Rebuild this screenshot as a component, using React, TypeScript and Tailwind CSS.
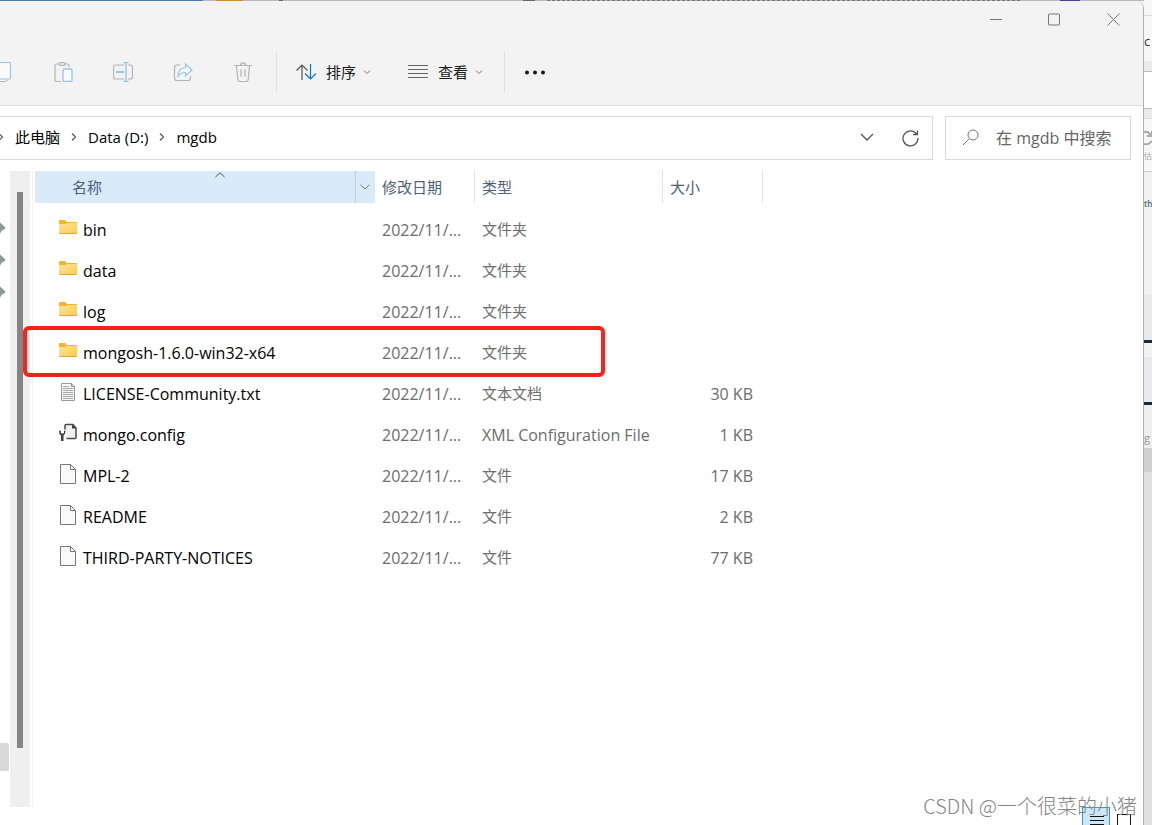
import React from "react";

type Kind = "folder" | "text" | "config" | "file";

const files: { name: string; kind: Kind; type: string; size: string; marked?: boolean }[] = [
  { name: "bin", kind: "folder", type: "文件夹", size: "" },
  { name: "data", kind: "folder", type: "文件夹", size: "" },
  { name: "log", kind: "folder", type: "文件夹", size: "" },
  { name: "mongosh-1.6.0-win32-x64", kind: "folder", type: "文件夹", size: "", marked: true },
  { name: "LICENSE-Community.txt", kind: "text", type: "文本文档", size: "30 KB" },
  { name: "mongo.config", kind: "config", type: "XML Configuration File", size: "1 KB" },
  { name: "MPL-2", kind: "file", type: "文件", size: "17 KB" },
  { name: "README", kind: "file", type: "文件", size: "2 KB" },
  { name: "THIRD-PARTY-NOTICES", kind: "file", type: "文件", size: "77 KB" },
];

function FileIcon({ kind }: { kind: Kind }) {
  if (kind === "folder") {
    return (
      <svg width="18" height="20" viewBox="0 0 18 20" className="shrink-0">
        <defs>
          <linearGradient id="folder" x1="0" y1="0" x2="1" y2="1">
            <stop offset="0" stopColor="#ffe3a0" />
            <stop offset="1" stopColor="#fbcb48" />
          </linearGradient>
        </defs>
        <path d="M0 3q0-1 1-1h5l1.500 2H17q1 0 1 1v4H0z" fill="#f8b51f" />
        <path d="M0 6h6.500L8 5h10v10q0 1-1 1H1q-1 0-1-1z" fill="url(#folder)" />
        <path d="M0.500 15.500h17" stroke="#e3a92e" />
      </svg>
    );
  }
  if (kind === "text") {
    return (
      <svg width="18" height="20" viewBox="0 0 18 20" fill="none" className="shrink-0">
        <path d="M2.500 1.500h10l3 3v14h-13z" fill="#fafafa" stroke="#9a9a9a" />
        <path d="M12.500 1.500v3h3" stroke="#8a8a8a" />
        <path d="M4 4.500h6M4 6.500h10M4 8.500h10M4 10.500h10M4 12.500h10M4 14.500h10M4 16.500h10" stroke="#a6a6a6" />
      </svg>
    );
  }
  if (kind === "config") {
    return (
      <svg width="18" height="20" viewBox="0 0 18 20" fill="none" className="shrink-0">
        <path d="M6 6.500V2.500q0-1 1-1h7L17 5v9.500q0 1-1 1H7.500" fill="#f0f0f2" stroke="#4a4a4a" strokeWidth="1.500" />
        <path d="M13 1.500v4h4.500z" fill="#444" />
        <path d="M0 8q0 3.500 2 4.200V18h2.500v-5.800Q6.500 11 6.500 8L5 7.500V10l-1.700.8L1.800 10V7.500z" fill="#3c3c3c" />
      </svg>
    );
  }
  return (
    <svg width="18" height="20" viewBox="0 0 18 20" fill="none" className="shrink-0">
      <path d="M1.500.5h10l5 5v14h-15z" fill="#fafafa" stroke="#777" />
      <path d="M11.500.5v5h5" stroke="#777" />
    </svg>
  );
}

function Chevron({ className = "" }: { className?: string }) {
  return (
    <svg width="8" height="8" viewBox="0 0 8 8" fill="none" stroke="currentColor" className={className}>
      <path d="M1 2.500l3 3 3-3" />
    </svg>
  );
}

function Crumb({ children }: { children: React.ReactNode }) {
  return (
    <li className="flex items-center">
      <svg width="6" height="10" viewBox="0 0 6 10" fill="none" stroke="#555" strokeWidth="1.200" className="mr-[11px]">
        <path d="M1 1.500L4.500 5 1 8.500" />
      </svg>
      <a href="#" className="mr-[11px]">{children}</a>
    </li>
  );
}

function TitleBar() {
  return (
    <div className="flex h-[38px] justify-end pb-0.5 text-[#777]">
      <button aria-label="最小化" className="flex w-[58px] items-center justify-center">
        <svg width="13" height="13" viewBox="0 0 13 13" fill="none" stroke="currentColor"><path d="M0 6.500h12" /></svg>
      </button>
      <button aria-label="最大化" className="flex w-[58px] items-center justify-center">
        <svg width="13" height="13" viewBox="0 0 13 13" fill="none" stroke="currentColor"><rect x=".5" y="1" width="11" height="11" rx=".5" /></svg>
      </button>
      <button aria-label="关闭" className="flex w-[60px] items-center justify-center">
        <svg width="13" height="13" viewBox="0 0 13 13" fill="none" stroke="currentColor"><path d="M.5.5l12 12M12.500.5l-12 12" /></svg>
      </button>
    </div>
  );
}

function Toolbar() {
  return (
    <div className="flex h-[66px] items-center text-[15px] text-[#1a1a1a]">
      <div className="flex items-center gap-10" role="group">
        <button aria-label="复制" className="h-5 w-[13px]">
          <svg width="12" height="20" viewBox="0 0 12 20" fill="none">
            <path d="M0 19.500h5q2 0 2.500-2" stroke="#b4b4b4" />
            <path d="M0 .5h9q1.500 0 1.500 1.500v13.500q0 1.500-1.500 1.500H0" stroke="#94c6ea" strokeWidth="1.200" fill="#fafafa" />
          </svg>
        </button>
        <button aria-label="粘贴" className="h-5 w-5">
          <svg width="20" height="20" viewBox="0 0 20 20" fill="none">
            <path d="M8 19.500H3.500q-1.500 0-1.500-1.500V3.500Q2 2 3.500 2H6M12 2h2.500Q16 2 16 3.500V5" stroke="#b4b4b4" strokeWidth="1.200" />
            <rect x="6" y=".6" width="6" height="2.800" rx="1.400" stroke="#b4b4b4" strokeWidth="1.200" />
            <rect x="10" y="7" width="9" height="12.500" rx="1.500" stroke="#94c6ea" strokeWidth="1.300" fill="#fafafa" />
          </svg>
        </button>
        <button aria-label="重命名" className="h-5 w-5">
          <svg width="20" height="20" viewBox="0 0 20 20" fill="none">
            <path d="M11 3H2.500Q.5 3 .5 5v10q0 2 2 2H11M15 3h2.500q2 0 2 2v10q0 2-2 2H15" stroke="#b4b4b4" strokeWidth="1.200" />
            <path d="M3 10h8" stroke="#94c6ea" strokeWidth="2" />
            <path d="M13 .5v19M10.500.5h5M10.500 19.500h5" stroke="#94c6ea" strokeWidth="1.300" />
          </svg>
        </button>
        <button aria-label="共享" className="h-5 w-5">
          <svg width="20" height="20" viewBox="0 0 20 20" fill="none">
            <path d="M7 3H4Q1.500 3 1.500 5.500V16q0 2.500 2.500 2.500H15q2.500 0 2.500-2.500v-2" stroke="#b4b4b4" strokeWidth="1.200" />
            <path d="M12.500 2l6.500 6-6.500 6v-3.500Q8 10.500 5 14q.5-8 7.500-8.500z" stroke="#94c6ea" strokeWidth="1.200" />
          </svg>
        </button>
        <button aria-label="删除" className="h-5 w-5">
          <svg width="20" height="20" viewBox="0 0 20 20" fill="none" stroke="#b4b4b4" strokeWidth="1.200">
            <path d="M1 3.500h18M7.500 3.500Q7.500.8 10 .8t2.500 2.700M3.500 3.500l1.300 14q.2 2 2 2h6.400q1.800 0 2-2l1.300-14M8 7.500v7M12 7.500v7" />
          </svg>
        </button>
      </div>
      <div className="ml-[23px] h-10 w-px bg-[#e0e0e0]" />
      <button className="ml-[19px] flex items-center">
        <svg width="20" height="16" viewBox="0 0 20 16" fill="none" strokeWidth="1.200" className="mr-[10px]">
          <path d="M6 16V1M.5 6.500L6 1l5.500 5.500" stroke="#555" />
          <path d="M14.500 0v15M9 9.500l5.500 5.500L20 9.500" stroke="#0078d4" />
        </svg>
        排序
        <Chevron className="ml-[7px] text-[#777]" />
      </button>
      <button className="ml-[37px] flex items-center">
        <svg width="20" height="14" viewBox="0 0 20 14" stroke="#666" className="mr-[10px]">
          <path d="M0 .5h20M0 4.500h20M0 8.500h20M0 12.500h20" />
        </svg>
        查看
        <Chevron className="ml-[7px] text-[#777]" />
      </button>
      <div className="ml-[21px] h-10 w-px bg-[#e0e0e0]" />
      <button aria-label="更多" className="ml-[19px]">
        <svg width="22" height="6" viewBox="0 0 22 6" fill="#1a1a1a">
          <circle cx="3" cy="3.500" r="2" /><circle cx="11" cy="3.500" r="2" /><circle cx="19" cy="3.500" r="2" />
        </svg>
      </button>
    </div>
  );
}

function AddressRow() {
  return (
    <div className="flex gap-3 py-2.5 pr-3">
      <nav className="flex h-11 flex-1 items-center border-y border-r border-[#d9d9d9]">
        <ol className="-ml-0.5 flex pb-0.5 text-[15px] text-black">
          <Crumb>此电脑</Crumb>
          <Crumb>Data (D:)</Crumb>
          <Crumb>mgdb</Crumb>
        </ol>
        <button aria-label="历史记录" className="mr-7 ml-auto">
          <svg width="14" height="14" viewBox="0 0 14 14" fill="none" stroke="#555" strokeWidth="1.300"><path d="M1 3l6 6 6-6" /></svg>
        </button>
        <button aria-label="刷新" className="mr-[13px]">
          <svg width="17" height="17" viewBox="0 0 17 17" fill="none" stroke="#555" strokeWidth="1.300">
            <path d="M16 8a7.500 7.500 0 1 1-2.500-5.200L15 4.500M15.500.5v4H11" />
          </svg>
        </button>
      </nav>
      <label className="flex h-11 w-[186px] items-center border border-[#d9d9d9] pl-4">
        <svg width="18" height="18" viewBox="0 0 18 18" fill="none" stroke="#777" className="shrink-0">
          <circle cx="11" cy="6" r="5" /><path d="M7.500 9.500L1 16" />
        </svg>
        <input
          type="search"
          aria-label="搜索"
          placeholder="在 mgdb 中搜索"
          className="ml-4 w-full min-w-0 text-[16px] placeholder:text-[#666] outline-none"
        />
      </label>
    </div>
  );
}

function SidePane() {
  return (
    <>
      <div className="flex w-2.5 flex-col">
        <div className="flex flex-col gap-5 pt-[51px]">
          {[0, 1, 2].map((i) => (
            <svg key={i} width="6" height="12" viewBox="0 0 6 12" fill="#8d979e"><path d="M0 .5L5 5v2L2 8.500 0 11.500z" /></svg>
          ))}
        </div>
        <div className="mt-auto mb-9 h-7 w-[9px] rounded-r-xs bg-[#d9d9d9]" />
      </div>
      <div className="flex w-5 justify-center bg-[#efefef] pt-[21px] pb-[59px]">
        <div className="w-1.5 bg-[#858585]" />
      </div>
      <div className="ml-0.5 w-px bg-[#f3f3f3]" />
    </>
  );
}

function FileTable() {
  return (
    <table className="ml-0.5 w-[728px] table-fixed border-separate border-spacing-0 self-start text-left text-[16px]">
      <colgroup>
        <col className="w-[340px]" />
        <col className="w-[100px]" />
        <col className="w-[188px]" />
        <col className="w-[100px]" />
      </colgroup>
      <thead>
        <tr className="h-8 text-[15px] text-[#4c607a]">
          <th className="p-0 font-normal">
            <div className="relative flex h-8 items-center rounded-xs bg-[#d9ebf9] pl-[37px]">
              名称
              <svg width="10" height="6" viewBox="0 0 10 6" fill="none" stroke="#555" className="absolute top-px left-[180px]">
                <path d="M.5 5L5 .8 9.500 5" />
              </svg>
              <button aria-label="筛选" className="ml-auto flex h-8 w-5 items-center justify-center border-l border-[#bcd3e4] pr-0.5">
                <svg width="10" height="6" viewBox="0 0 10 6" fill="none" stroke="#777"><path d="M.5.8L5 5 9.500.8" /></svg>
              </button>
            </div>
          </th>
          <th className="border-r border-[#e2e2e2] py-0 pr-0 pl-[7px] font-normal">修改日期</th>
          <th className="border-r border-[#e2e2e2] py-0 pr-0 pl-[7px] font-normal">类型</th>
          <th className="border-r border-[#e2e2e2] py-0 pr-0 pl-[7px] font-normal">大小</th>
        </tr>
        <tr className="h-1.5" aria-hidden="true"><td className="p-0" colSpan={4} /></tr>
      </thead>
      <tbody>
        {files.map((file) => (
          <tr key={file.name} className="h-[41px] text-[#6d6d6d]">
            <td className="relative py-0 pr-0 pl-6 text-black">
              <div className="flex items-center gap-1.5">
                <div className="pb-[3px]"><FileIcon kind={file.kind} /></div>
                {file.name}
              </div>
              {file.marked && (
                <div className="pointer-events-none absolute -top-1.5 -left-3 h-[51px] w-[582px] rounded-md border-4 border-[#fd2014]" />
              )}
            </td>
            <td className="py-0 pr-0 pl-[7px]">2022/11/...</td>
            <td className={file.kind === "config" ? "py-0 pr-0 pl-[7px] whitespace-nowrap" : "py-0 pr-0 pl-[7px] text-[15px] whitespace-nowrap"}>
              {file.type}
            </td>
            <td className="py-0 pr-2.5 pl-0 text-right">{file.size}</td>
          </tr>
        ))}
      </tbody>
    </table>
  );
}

// Sliver of the browser window that sits behind the explorer
function BackgroundEdge() {
  return (
    <div className="flex w-2 flex-col overflow-hidden bg-[#e0e0e0] text-[13px] leading-[18px] text-[#333]">
      <div className="h-4 border-b border-[#dcdcdc] bg-[#f6f6f6]" />
      <div className="flex h-[45px] items-center bg-[#f7f7f7] pt-1">c</div>
      <div className="h-[11px] border-b border-[#bbb] bg-[#ebebeb]" />
      <div className="h-[37px] border-b border-[#bbb] bg-white" />
      <div className="h-[10px] border-b border-[#ddd] bg-[#ebebeb]" />
      <div className="h-[53px] border-b border-[#ccc] bg-[#f7f7f7] pt-2.5 text-[#aaa]">
        <svg width="8" height="18" viewBox="0 0 8 18" fill="none" stroke="#aaa" strokeWidth="2"><path d="M0 3q5-1 7 4M8 12q-3 4-8 3M8 2v5H3" /></svg>
        <div className="text-[8px]">估</div>
      </div>
      <div className="h-[122px] bg-[#f2f2f2] pt-[23px] text-[8px] font-semibold text-[#47605c]">th</div>
      <div className="h-[49px] border-b-3 border-[#1c2a38] bg-[#e7e9eb]" />
      <div className="h-[14px] bg-[#f2f2f2]" />
      <div className="h-[48px] border-b-3 border-[#1c2a38] bg-[#e7e9ed]" />
      <div className="h-[43px] bg-[#efefef] pt-6 text-[11px] text-[#999]">g</div>
      <div className="h-6 bg-[#d0d0d0]" />
    </div>
  );
}

export default function App() {
  return (
    <div className="flex h-screen overflow-hidden bg-[#f2f2f2] font-['Open_Sans','Noto_Sans_CJK_SC',sans-serif]">
      <div className="relative flex min-w-0 flex-1 flex-col">
        <div className="flex h-px shrink-0 bg-[#b9b9b9]">
          <div className="w-[203px] bg-[#4a7ab5]" />
          <div className="ml-[13px] w-[27px] bg-[#d08a2c]" />
          <div className="ml-9 w-1 bg-[#666]" />
          <div className="ml-[240px] w-3 bg-[#666]" />
          <div className="ml-3 flex-1 border-t border-dashed border-[#777]" />
          <div className="ml-10 w-5 bg-[#4040a8]" />
          <div className="w-16" />
        </div>
        <main className="flex min-h-0 flex-1 flex-col rounded-tr-lg border-r border-[#b0b0b0] bg-white">
          <header className="rounded-tr-lg border-b border-[#dedede] bg-[#f3f3f3]">
            <TitleBar />
            <Toolbar />
          </header>
          <AddressRow />
          <div className="flex flex-1 pt-px">
            <SidePane />
            <FileTable />
          </div>
          <footer className="flex h-[18px] shrink-0 items-start justify-end gap-[7px] overflow-hidden pr-3">
            <button aria-label="详细信息" className="flex h-7 w-7 shrink-0 items-start border border-[#26a0da] bg-[#cce8f6] pt-2 pl-[7px]">
              <svg width="14" height="12" viewBox="0 0 14 12" stroke="#111" className="shrink-0"><path d="M0 .5h14M0 4.500h14M0 8.500h14" /></svg>
            </button>
            <button aria-label="大图标" className="pt-[7px]">
              <svg width="14" height="14" viewBox="0 0 14 14" fill="none" stroke="#111"><rect x=".5" y=".5" width="13" height="13" /></svg>
            </button>
          </footer>
        </main>
        <div className="pointer-events-none absolute right-[7px] bottom-1 font-['Noto_Sans_CJK_SC',sans-serif] text-[20px] leading-[30px] font-light text-[#858585]">
          CSDN @一个很菜的小猪
        </div>
      </div>
      <BackgroundEdge />
    </div>
  );
}
